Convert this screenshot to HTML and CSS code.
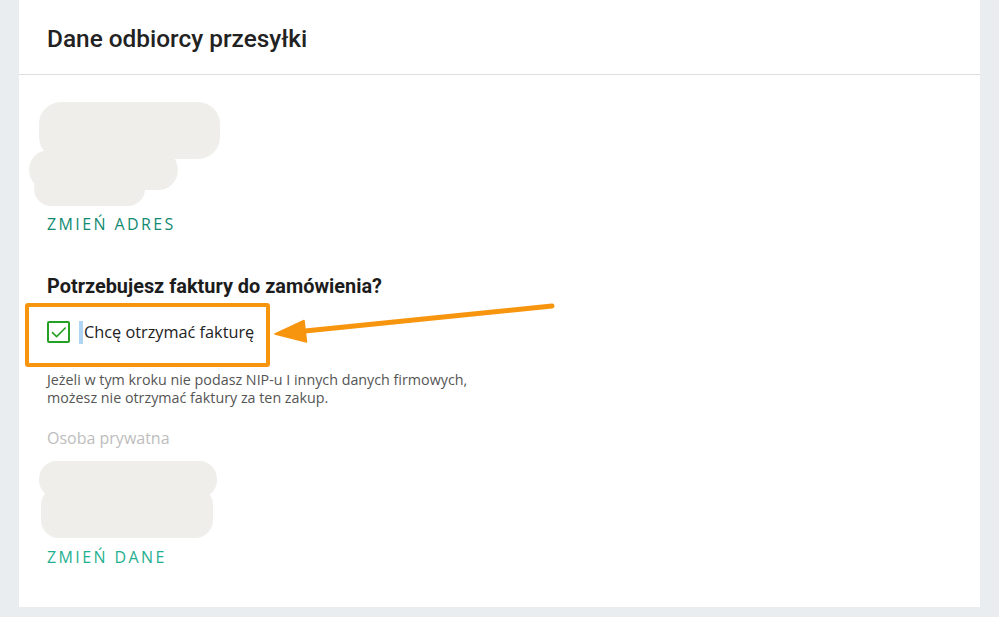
FILE: index.html
```html
<!DOCTYPE html>
<html lang="pl">
<head>
<meta charset="utf-8">
<link rel="stylesheet" href="styles.css">
</head>
<body>
<div class="page">
  <section class="card">
    <header class="card-header">
      <h1 class="title">Dane odbiorcy przesyłki</h1>
    </header>
    <div class="card-body">
      <div class="redact redact-address">
        <span class="pill pa1"></span>
        <span class="pill pa2"></span>
        <span class="pill pa3"></span>
      </div>
      <a class="link link-dark">ZMIEŃ ADRES</a>

      <h2 class="question">Potrzebujesz faktury do zamówienia?</h2>
      <div class="invoice-row">
        <span class="checkbox">
          <svg width="22" height="22" viewBox="0 0 22 22"><path d="M4.5 11.6 L8.6 15.6 L17.2 7" fill="none" stroke="#25a025" stroke-width="1.6" stroke-linecap="round" stroke-linejoin="round"/></svg>
        </span>
        <span class="caret"></span>
        <span class="label">Chcę otrzymać fakturę</span>
      </div>
      <p class="hint">Jeżeli w tym kroku nie podasz NIP-u I innych danych firmowych,<br>możesz nie otrzymać faktury za ten zakup.</p>
      <p class="person">Osoba prywatna</p>
      <div class="redact redact-data">
        <span class="pill pd1"></span>
        <span class="pill pd2"></span>
      </div>
      <a class="link link-light">ZMIEŃ DANE</a>
    </div>
  </section>
  <svg class="arrow" width="999" height="617" viewBox="0 0 999 617">
    <line x1="552" y1="306" x2="300" y2="331.5" stroke="#f7950f" stroke-width="5" stroke-linecap="round"/>
    <polygon points="275,334 304,320.5 306.5,342" fill="#f7950f" stroke="#f7950f" stroke-width="1.5" stroke-linejoin="round"/>
  </svg>
</div>
</body>
</html>
```
FILE: styles.css
```css
* { box-sizing: border-box; }
html, body { margin: 0; padding: 0; }
body {
  background: #e9edf0;
  font-family: "Open Sans", "Noto Sans", sans-serif;
  color: #222;
}
.page {
  position: relative;
  width: 999px;
  height: 617px;
  overflow: hidden;
}
.card {
  margin-left: 19px;
  width: 961px;
  height: 607px;
  background: #fff;
}
.card-header {
  height: 75px;
  padding: 25px 28px 0;
  border-bottom: 1px solid #dedede;
}
.title {
  margin: 0;
  font-family: Roboto, "Liberation Sans", sans-serif;
  font-weight: 500;
  font-size: 24.4px;
  line-height: 28px;
  color: #222;
}
.card-body {
  padding: 27px 28px 0;
  display: flex;
  flex-direction: column;
  align-items: flex-start;
}
.redact {
  position: relative;
  width: 190px;
}
.redact-address { height: 104px; }
.redact-data { height: 77px; margin-top: 13px; }
.pill {
  position: absolute;
  background: #efeeeb;
}
.pa1 { left: -8px; top: 0; width: 181px; height: 57px; border-radius: 22px; }
.pa2 { left: -18px; top: 48px; width: 149px; height: 40px; border-radius: 20px; }
.pa3 { left: -13px; top: 70px; width: 111px; height: 34px; border-radius: 17px; }
.pd1 { left: -8px; top: 0; width: 178px; height: 37px; border-radius: 18px; }
.pd2 { left: -6px; top: 26px; width: 172px; height: 51px; border-radius: 18px; }
.link {
  display: block;
  font-size: 16px;
  line-height: 20px;
  letter-spacing: 2.4px;
  margin-top: 8px;
}
.link-dark { color: #128a72; }
.link-light { color: #1fb08f; margin-top: 9px; }
.question {
  margin: 41px 0 0;
  font-family: Roboto, "Liberation Sans", sans-serif;
  font-weight: 700;
  font-size: 19.9px;
  line-height: 24px;
  color: #1c1c1c;
}
.invoice-row {
  margin: 4px 0 0 -22px;
  width: 245px;
  height: 64px;
  border: 4px solid #f7950f;
  border-radius: 3px;
  padding: 14px 0 0 18px;
  display: flex;
  align-items: flex-start;
}
.checkbox {
  width: 23px;
  height: 22px;
  border: 2px solid #25a025;
  border-radius: 2px;
  display: flex;
  align-items: center;
  justify-content: center;
  flex: none;
}
.checkbox svg { display: block; flex: none; }
.caret {
  width: 4px;
  height: 23px;
  margin-left: 9px;
  background: #b0d4f4;
  flex: none;
}
.label {
  margin-left: 1px;
  font-size: 16.3px;
  line-height: 22px;
  color: #222;
  white-space: nowrap;
}
.hint {
  margin: 4px 0 0;
  font-size: 14.3px;
  line-height: 18px;
  color: #555;
}
.person {
  margin: 21px 0 0;
  font-size: 16px;
  line-height: 20px;
  color: #bdbdbd;
}
.arrow {
  position: absolute;
  left: 0;
  top: 0;
  pointer-events: none;
}
```
